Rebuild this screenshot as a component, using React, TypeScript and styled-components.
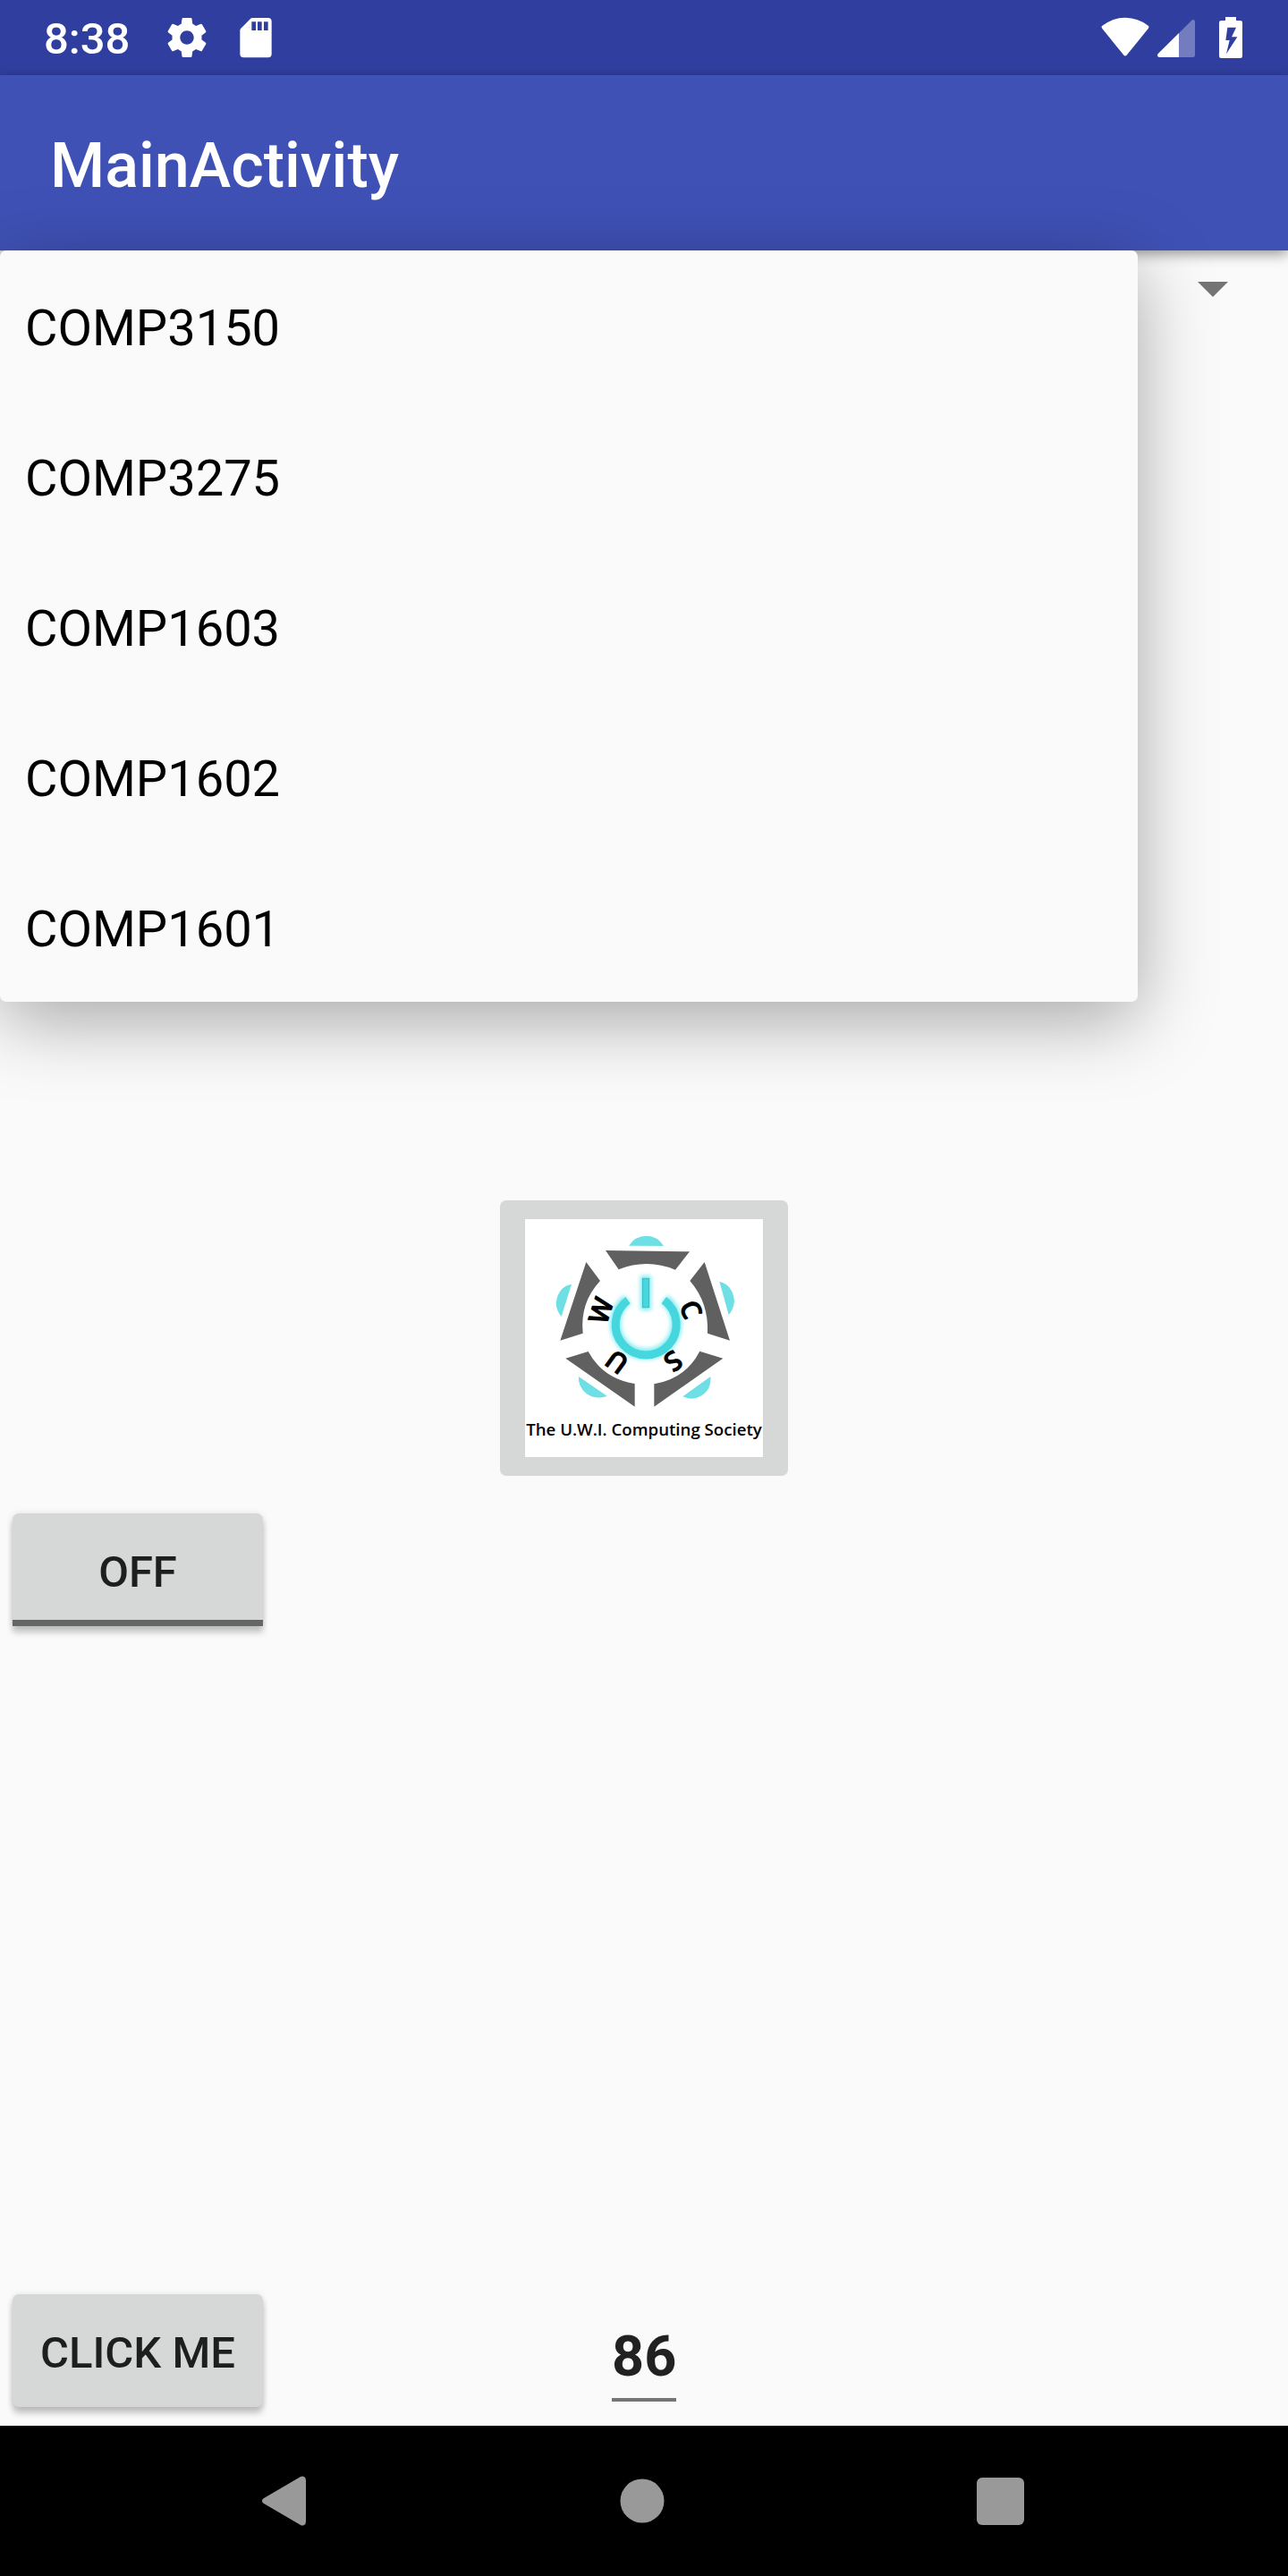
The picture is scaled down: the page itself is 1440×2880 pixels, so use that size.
import React from "react";
import styled, { createGlobalStyle } from "styled-components";

const GlobalStyle = createGlobalStyle`
  *, *::before, *::after { box-sizing: border-box; }
  body {
    margin: 0;
    background: #fafafa;
    font-family: Roboto, "Liberation Sans", sans-serif;
  }
  button, input, select {
    margin: 0;
    padding: 0;
    border: 0;
    font-family: inherit;
  }
`;

const Screen = styled.div`
  display: flex;
  flex-direction: column;
  min-height: 100vh;
`;

const StatusBar = styled.div`
  display: flex;
  align-items: center;
  justify-content: space-between;
  height: 84px;
  padding: 0 51px 0 49px;
  background: #303f9f;
  color: #fff;
`;

const StatusGroup = styled.div<{ $gap: number }>`
  display: flex;
  align-items: center;
  gap: ${(p) => p.$gap}px;
`;

const Clock = styled.time`
  padding: 4px 5px 0 0;
  font-size: 49px;
  font-weight: 500;
  line-height: 56px;
`;

const BatterySlot = styled.span`
  display: flex;
  padding-left: 18px;
`;

const AppBar = styled.header`
  position: relative;
  display: flex;
  align-items: center;
  height: 196px;
  padding: 6px 56px 0;
  background: #3f51b5;
  color: #fff;
  box-shadow: 0 4px 14px rgba(0, 0, 0, 0.4);
`;

const Title = styled.h1`
  margin: 0;
  font-size: 70px;
  font-weight: 500;
  line-height: 84px;
`;

const Content = styled.main`
  flex: 1;
  display: grid;
  grid-template-rows: minmax(0, 1fr) auto minmax(0, 1fr);
`;

const SpinnerArea = styled.div`
  position: relative;
`;

const SpinnerBox = styled.div`
  display: grid;
  align-items: center;
  height: 86px;
  > * { grid-area: 1 / 1; }
`;

const Spinner = styled.select`
  appearance: none;
  width: 100%;
  height: 84px;
  padding-left: 28px;
  background: transparent;
  color: #000;
  font-size: 56px;
`;

const Caret = styled.svg`
  justify-self: end;
  margin-right: 67px;
  pointer-events: none;
`;

const Popup = styled.ul`
  position: absolute;
  top: 0;
  left: 0;
  right: 168px;
  margin: 0;
  padding: 0;
  list-style: none;
  background: #fafafa;
  border-radius: 7px;
  box-shadow: 0 20px 84px rgba(0, 0, 0, 0.34);
`;

const PopupItem = styled.button`
  display: flex;
  align-items: center;
  width: 100%;
  height: 168px;
  padding: 6px 0 0 28px;
  background: transparent;
  color: #000;
  font-size: 56px;
  line-height: 66px;
`;

const ImageButton = styled.button`
  justify-self: center;
  display: flex;
  padding: 21px 28px;
  border-radius: 7px;
  background: #d6d8d7;
`;

const Lower = styled.div`
  display: flex;
  flex-direction: column;
  justify-content: space-between;
  padding: 42px 14px 21px;
`;

const RaisedButton = styled.button<{ $underlined?: boolean }>`
  width: 280px;
  height: 126px;
  padding-top: ${(p) => (p.$underlined ? 12 : 5)}px;
  border-bottom: ${(p) => (p.$underlined ? "7px solid #636663" : "0")};
  border-radius: ${(p) => (p.$underlined ? "7px 7px 0 0" : "7px")};
  background: #d6d8d7;
  color: #1e1e1e;
  font-size: 49px;
  font-weight: 500;
  line-height: 56px;
  white-space: nowrap;
  box-shadow: 0 7px 7px rgba(0, 0, 0, 0.22), 0 0 7px rgba(0, 0, 0, 0.1);
`;

const BottomRow = styled.div`
  display: grid;
  grid-template-columns: 1fr auto 1fr;
  align-items: end;
`;

const NumberField = styled.input`
  width: 72px;
  height: 91px;
  margin-bottom: 6px;
  padding-bottom: 6px;
  border-bottom: 4px solid #757575;
  background: transparent;
  color: #212121;
  font-size: 63px;
  font-weight: 700;
  text-align: center;
`;

const NavBar = styled.nav`
  display: flex;
  height: 168px;
  padding: 0 122px 0 118px;
  background: #000;
`;

const NavButton = styled.button`
  flex: 1;
  display: flex;
  align-items: center;
  justify-content: center;
  background: transparent;
`;

const GearIcon = () => (
  <svg width="44" height="46" viewBox="2 1.6 20 20.8" fill="#fff" aria-hidden="true">
    <path d="M19.43 12.98c.04-.32.07-.64.07-.98s-.03-.66-.07-.98l2.11-1.65c.19-.15.24-.42.12-.64l-2-3.46c-.12-.22-.39-.3-.61-.22l-2.49 1c-.52-.4-1.08-.73-1.69-.98l-.38-2.65A.488.488 0 0 0 14 2h-4c-.25 0-.46.18-.49.42l-.38 2.65c-.61.25-1.17.59-1.69.98l-2.49-1c-.23-.09-.49 0-.61.22l-2 3.46c-.13.22-.07.49.12.64l2.11 1.65c-.04.32-.07.65-.07.98s.03.66.07.98l-2.11 1.65c-.19.15-.24.42-.12.64l2 3.46c.12.22.39.3.61.22l2.49-1c.52.4 1.08.73 1.69.98l.38 2.65c.03.24.24.42.49.42h4c.25 0 .46-.18.49-.42l.38-2.65c.61-.25 1.17-.59 1.69-.98l2.49 1c.23.09.49 0 .61-.22l2-3.46c.12-.22.07-.49-.12-.64l-2.11-1.65zM12 15.5c-1.93 0-3.5-1.57-3.5-3.5s1.57-3.5 3.5-3.5 3.5 1.57 3.5 3.5-1.57 3.5-3.5 3.5z" />
  </svg>
);

const SdCardIcon = () => (
  <svg width="36" height="46" viewBox="0 0 108 138" fill="#fff" aria-hidden="true">
    <path
      fillRule="evenodd"
      d="M42 3H95Q107 3 107 15V124Q107 136 95 136H13Q1 136 1 124V45Q1 41 4 38L36 6Q39 3 42 3ZM40 16V45H54V16ZM60 16V45H74V16ZM81 16V45H95V16Z"
    />
  </svg>
);

const WifiIcon = () => (
  <svg width="54" height="46" viewBox="0 0 162 138" fill="#fff" aria-hidden="true">
    <path d="M3 30Q0 34 4 39L75 127Q81 134 87 127L158 39Q162 34 159 30Q122 2 81 2Q40 2 3 30Z" />
  </svg>
);

const SignalIcon = () => (
  <svg width="42" height="46" viewBox="0 0 126 138" fill="#fff" aria-hidden="true">
    <path d="M72 54V135H7Q0 135 0 128Q0 125 3 122Z" />
    <path opacity="0.32" d="M72 54L115 11Q118 8 121 9Q126 10 126 16V128Q126 135 119 135H72Z" />
  </svg>
);

const BatteryIcon = () => (
  <svg width="26" height="46" viewBox="0 0 78 138" fill="#fff" aria-hidden="true">
    <path
      fillRule="evenodd"
      d="M21 0H57V12H71Q78 12 78 19V131Q78 138 71 138H7Q0 138 0 131V19Q0 12 7 12H21ZM28 35L22 78H35L24 124L61 67H42L57 35Z"
    />
  </svg>
);

const shards = [
  "M411 234L693 238L645 299Q550 260 455 298Z",
  "M743 273L828 536L753 512Q758 410 694 336Z",
  "M805 596L574 758V682Q680 664 727 572Z",
  "M509 758L277 596L353 573Q402 664 509 681Z",
  "M259 536L346 273L393 336Q324 410 335 512Z",
];

const domes = [
  "M489 218Q511 185 548 185Q585 185 606 219Z",
  "M793 338Q838 350 843 403Q841 432 824 450Z",
  "M763 657Q767 700 733 721Q703 740 670 724Z",
  "M416 722Q378 737 346 713Q318 691 321 657Z",
  "M297 347Q252 355 245 410Q246 437 263 455Z",
];

const letters = [
  { char: "W", x: 396, y: 436, turn: 288 },
  { char: "U", x: 449, y: 608, turn: 216 },
  { char: "S", x: 638, y: 605, turn: 144 },
  { char: "C", x: 697, y: 432, turn: 68 },
];

const SocietyLogo = () => (
  <svg width="266" height="266" viewBox="141 129 798 798" role="img" aria-label="The U.W.I. Computing Society">
    <defs>
      <filter id="glow" x="-30%" y="-30%" width="160%" height="160%">
        <feGaussianBlur stdDeviation="8" />
      </filter>
    </defs>
    <rect x="141" y="129" width="798" height="798" fill="#fff" />
    {domes.map((d) => <path key={d} d={d} fill="#6edfe5" />)}
    {shards.map((d) => <path key={d} d={d} fill="#606060" />)}
    <g fill="none" stroke="#7cecf2" filter="url(#glow)">
      <path d="M485 398A102 102 0 1 0 608 398" strokeWidth="36" />
      <path d="M535 326H557V427H535Z" strokeWidth="14" />
    </g>
    <path d="M486 401A102 102 0 1 0 607 401" fill="none" stroke="#45d6de" strokeWidth="27" />
    <rect x="535" y="328" width="22" height="97" fill="#45d6de" stroke="#2fbcc5" strokeWidth="3" />
    {letters.map((l) => (
      <text
        key={l.char}
        transform={`translate(${l.x} ${l.y}) rotate(${l.turn})`}
        y="32"
        textAnchor="middle"
        fontFamily='"Open Sans", "Noto Sans", sans-serif'
        fontSize="90"
        fontWeight="600"
        stroke="#000"
        strokeWidth="3"
        strokeLinejoin="round"
      >
        {l.char}
      </text>
    ))}
    <text
      x="540"
      y="855"
      textAnchor="middle"
      fontFamily='"Open Sans", "Noto Sans", sans-serif'
      fontSize="56"
      fontWeight="600"
    >
      The U.W.I. Computing Society
    </text>
  </svg>
);

const courses = ["COMP3150", "COMP3275", "COMP1603", "COMP1602", "COMP1601"];

export default function App() {
  return (
    <>
      <GlobalStyle />
      <Screen>
        <StatusBar>
          <StatusGroup $gap={37}>
            <Clock>8:38</Clock>
            <GearIcon />
            <SdCardIcon />
          </StatusGroup>
          <StatusGroup $gap={9}>
            <WifiIcon />
            <SignalIcon />
            <BatterySlot>
              <BatteryIcon />
            </BatterySlot>
          </StatusGroup>
        </StatusBar>
        <AppBar>
          <Title>MainActivity</Title>
        </AppBar>
        <Content>
          <SpinnerArea>
            <SpinnerBox>
              <Spinner aria-label="Course" defaultValue={courses[0]}>
                {courses.map((c) => <option key={c}>{c}</option>)}
              </Spinner>
              <Caret width="34" height="17" viewBox="0 0 34 17" fill="#757575" aria-hidden="true">
                <path d="M0 0H34L17 17Z" />
              </Caret>
            </SpinnerBox>
            <Popup>
              {courses.map((c) => (
                <li key={c}>
                  <PopupItem type="button">{c}</PopupItem>
                </li>
              ))}
            </Popup>
          </SpinnerArea>
          <ImageButton type="button">
            <SocietyLogo />
          </ImageButton>
          <Lower>
            <RaisedButton type="button" aria-pressed="false" $underlined>OFF</RaisedButton>
            <BottomRow>
              <RaisedButton type="button">CLICK ME</RaisedButton>
              <NumberField type="text" inputMode="numeric" aria-label="Number" defaultValue="86" />
            </BottomRow>
          </Lower>
        </Content>
        <NavBar>
          <NavButton type="button" aria-label="Back">
            <svg width="50" height="56" viewBox="0 0 50 56" fill="#999">
              <path d="M43 1Q45 0 47 1Q49 2 49 5V51Q49 54 47 55Q45 56 43 55L2 31Q0 30 0 28Q0 26 2 25Z" />
            </svg>
          </NavButton>
          <NavButton type="button" aria-label="Home">
            <svg width="50" height="50" viewBox="0 0 50 50" fill="#999">
              <circle cx="25" cy="25" r="24.5" />
            </svg>
          </NavButton>
          <NavButton type="button" aria-label="Recent apps">
            <svg width="53" height="53" viewBox="0 0 53 53" fill="#999">
              <rect width="53" height="53" rx="6" />
            </svg>
          </NavButton>
        </NavBar>
      </Screen>
    </>
  );
}
